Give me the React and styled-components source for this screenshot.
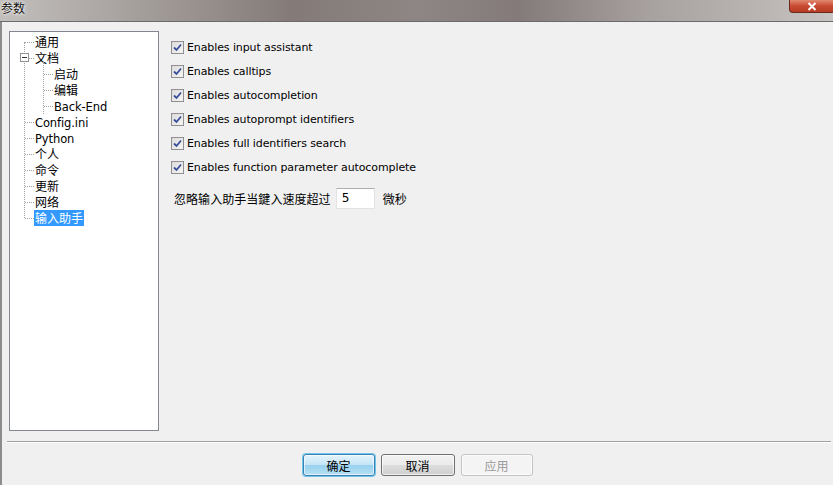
import React from 'react';
import styled, { createGlobalStyle } from 'styled-components';

const Global = createGlobalStyle`
  html, body { margin: 0; padding: 0; background: #f0f0f0; }
  body { font-family: Tahoma, "DejaVu Sans", "Noto Sans CJK SC", sans-serif; font-size: 12px; color: #000; }
`;

const Window = styled.div`
  width: 833px;
  height: 485px;
  display: flex;
  flex-direction: column;
  overflow: hidden;
  background: #f0f0f0;
`;

const TitleBar = styled.div`
  height: 21px;
  flex: none;
  display: flex;
  align-items: flex-start;
  justify-content: space-between;
  background: linear-gradient(90deg, #c2bfbd 0%, #a29c99 18%, #847b79 35%, #8e8684 50%, #837a79 62%, #a7a19f 78%, #bbb6b4 92%, #c8c4c3 100%);
  border-bottom: 1px solid #6b6b6b;
`;

const Title = styled.span`
  font-family: "Noto Sans CJK SC", sans-serif;
  font-size: 12px;
  line-height: 14px;
  padding: 1px 0 0 1px;
  color: #111;
  text-shadow: 0 0 4px #fff, 0 0 2px #fff;
`;

const Close = styled.div`
  width: 44px;
  height: 12px;
  margin-right: -2px;
  border: 1px solid #6a2a20;
  border-top: none;
  border-radius: 0 0 4px 4px;
  background: linear-gradient(180deg, #e08a70 0%, #c94b33 50%, #b73a22 100%);
  display: flex;
  align-items: center;
  justify-content: center;
`;

const Body = styled.div`
  flex: 1;
  display: flex;
  flex-direction: column;
  border-left: 2px solid #8c8c8c;
`;

const Main = styled.div`
  flex: 1;
  display: flex;
  padding: 9px 0 0 7px;
  gap: 11px;
`;

const TreePanel = styled.div`
  width: 148px;
  height: 398px;
  background: #fff;
  border: 1px solid #828790;
  position: relative;
  flex: none;
`;

const TreeList = styled.ul`
  list-style: none;
  margin: 0;
  padding: 2px 0 0 0;
`;

const Node = styled.li`
  height: 16px;
  display: flex;
  align-items: center;
  padding-left: ${p => (p.$level ? 43 : 24)}px;
  position: relative;
`;

const NodeLabel = styled.span`
  font-family: "Noto Sans CJK SC", sans-serif;
  font-size: 12px;
  line-height: 16px;
  padding: 0 1px;
  background: ${p => (p.$selected ? '#3399ff' : 'transparent')};
  color: ${p => (p.$selected ? '#fff' : '#000')};
`;

const Latin = styled.span`
  font-family: Tahoma, "DejaVu Sans", sans-serif;
  font-size: 11.5px;
  letter-spacing: -0.1px;
`;

const HDots = styled.span`
  position: absolute;
  left: ${p => p.$x}px;
  top: 8px;
  width: 9px;
  border-top: 1px dotted #a0a0a0;
`;

const VDots = styled.span`
  position: absolute;
  left: ${p => p.$x}px;
  top: ${p => p.$top}px;
  height: ${p => p.$h}px;
  border-left: 1px dotted #a0a0a0;
`;

const Expander = styled.span`
  position: absolute;
  left: 10px;
  top: 3px;
  width: 7px;
  height: 7px;
  border: 1px solid #919191;
  background: #fff;
  z-index: 1;
  &::after {
    content: '';
    position: absolute;
    left: 1px;
    top: 3px;
    width: 5px;
    border-top: 1px solid #333;
  }
`;

const Options = styled.div`
  padding-top: 4px;
  display: flex;
  flex-direction: column;
`;

const CheckRow = styled.label`
  height: 24px;
  display: flex;
  align-items: center;
  gap: 3px;
  font-family: Tahoma, "DejaVu Sans", sans-serif;
  font-size: 11px;
  letter-spacing: -0.1px;
`;

const Box = styled.span`
  width: 11px;
  height: 11px;
  border: 1px solid #8f8f8f;
  background: linear-gradient(135deg, #dcdcdc 0%, #f6f6f6 100%);
  display: flex;
  align-items: center;
  justify-content: center;
  margin-left: 1px;
`;

const DelayRow = styled.div`
  margin-top: 8px;
  display: flex;
  align-items: center;
  height: 22px;
  padding-left: 4px;
  font-family: "Noto Sans CJK SC", sans-serif;
  font-size: 12px;
  letter-spacing: 0.05px;
`;

const Field = styled.div`
  width: 39px;
  height: 21px;
  margin: 0 8px 0 5px;
  background: #fff;
  border: 1px solid #e3e3e3;
  border-top-color: #abadb3;
  box-sizing: border-box;
  padding-left: 5px;
  font-family: Tahoma, "DejaVu Sans", sans-serif;
  font-size: 12px;
  line-height: 18px;
`;

const Separator = styled.div`
  margin: 0 2px 0 5px;
  border-top: 1px solid #a0a0a0;
  border-bottom: 1px solid #fff;
`;

const Footer = styled.div`
  height: 42px;
  display: flex;
  justify-content: center;
  align-items: flex-start;
  padding-top: 11px;
  box-sizing: border-box;
  gap: 6px;
`;

const Button = styled.div`
  width: ${p => p.$w}px;
  height: 22px;
  box-sizing: border-box;
  border-radius: 3px;
  display: flex;
  align-items: center;
  justify-content: center;
  font-family: "Noto Sans CJK SC", sans-serif;
  font-size: 12px;
  border: 1px solid ${p => (p.$primary ? '#3c7fb1' : p.$disabled ? '#c4c4c4' : '#707070')};
  color: ${p => (p.$disabled ? '#9a9a9a' : '#000')};
  background: ${p =>
    p.$primary
      ? 'linear-gradient(180deg, #e5f4fc 0%, #c4e5f6 50%, #98d1ef 51%, #b6e0f4 100%)'
      : p.$disabled
      ? '#f4f4f4'
      : 'linear-gradient(180deg, #f2f2f2 0%, #ebebeb 50%, #dddddd 51%, #cfcfcf 100%)'};
  box-shadow: ${p => (p.$primary ? '0 0 0 1px #6ec6ee, inset 0 0 0 1px rgba(255,255,255,0.6)' : 'inset 0 0 0 1px rgba(255,255,255,0.7)')};
`;

const tree = [
  { label: '通用' },
  { label: '文档', expander: true },
  { label: '启动', level: 1 },
  { label: '编辑', level: 1 },
  { label: 'Back-End', level: 1, latin: true },
  { label: 'Config.ini', latin: true },
  { label: 'Python', latin: true },
  { label: '个人' },
  { label: '命令' },
  { label: '更新' },
  { label: '网络' },
  { label: '输入助手', selected: true },
];

const options = [
  'Enables input assistant',
  'Enables calltips',
  'Enables autocompletion',
  'Enables autoprompt identifiers',
  'Enables full identifiers search',
  'Enables function parameter autocomplete',
];

const Check = () => (
  <Box>
    <svg width="9" height="9" viewBox="0 0 9 9">
      <path d="M1 4.5 L3.5 7 L8 1.5" fill="none" stroke="#3b4d9a" strokeWidth="1.8" />
    </svg>
  </Box>
);

export default function App() {
  return (
    <Window>
      <Global />
      <TitleBar>
        <Title>参数</Title>
        <Close>
          <svg width="10" height="9" viewBox="0 0 10 9">
            <path d="M1.5 1 L8.5 8 M8.5 1 L1.5 8" stroke="#fff" strokeWidth="2" />
          </svg>
        </Close>
      </TitleBar>
      <Body>
        <Main>
          <TreePanel>
            <TreeList>
              {tree.map((n, i) => (
                <Node key={i} $level={n.level}>
                  {i === 0 && <VDots $x={14} $top={8} $h={176} />}
                  {n.expander && <VDots $x={33} $top={12} $h={52} />}
                  <HDots $x={n.level ? 34 : 15} />
                  {n.expander && <Expander />}
                  <NodeLabel $selected={n.selected}>
                    {n.latin ? <Latin>{n.label}</Latin> : n.label}
                  </NodeLabel>
                </Node>
              ))}
            </TreeList>
          </TreePanel>
          <Options>
            {options.map(o => (
              <CheckRow key={o}>
                <Check />
                {o}
              </CheckRow>
            ))}
            <DelayRow>
              忽略输入助手当鍵入速度超过
              <Field>5</Field>
              微秒
            </DelayRow>
          </Options>
        </Main>
        <Separator />
        <Footer>
          <Button $w={72} $primary>确定</Button>
          <Button $w={74}>取消</Button>
          <Button $w={72} $disabled>应用</Button>
        </Footer>
      </Body>
    </Window>
  );
}
